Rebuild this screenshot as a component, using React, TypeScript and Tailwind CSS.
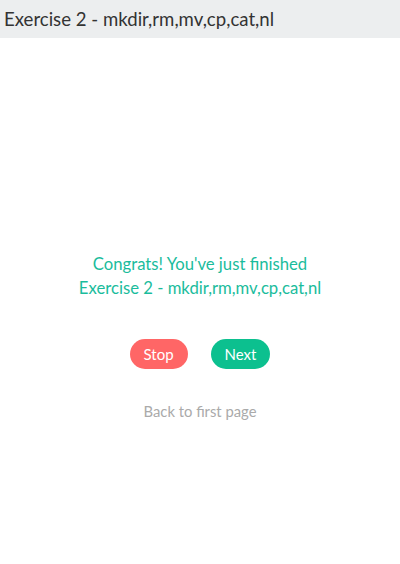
import React from "react";

export default function App() {
  return (
    <div className="w-[400px] h-[564px] bg-white flex flex-col" style={{ fontFamily: "Lato, 'Noto Sans', sans-serif" }}>
      <div className="h-[38px] bg-[#eceeef] flex items-center px-[4px]">
        <span className="text-[18.6px] text-[#333333] leading-none">Exercise 2 - mkdir,rm,mv,cp,cat,nl</span>
      </div>
      <div className="flex flex-col items-center pt-[214px]">
        <div className="text-center text-[16.7px] leading-[24px] text-[#1abc9c]">
          <div>Congrats! You've just finished</div>
          <div>Exercise 2 - mkdir,rm,mv,cp,cat,nl</div>
        </div>
        <div className="flex gap-[23px] mt-[39px]">
          <button className="h-[30px] px-[14px] rounded-full bg-[#ff6666] text-white text-[15px]">Stop</button>
          <button className="h-[30px] px-[14px] rounded-full bg-[#0cc08f] text-white text-[15px]">Next</button>
        </div>
        <a className="mt-[32px] text-[14.8px] leading-[20px] text-[#aaaaaa]">Back to first page</a>
      </div>
    </div>
  );
}
